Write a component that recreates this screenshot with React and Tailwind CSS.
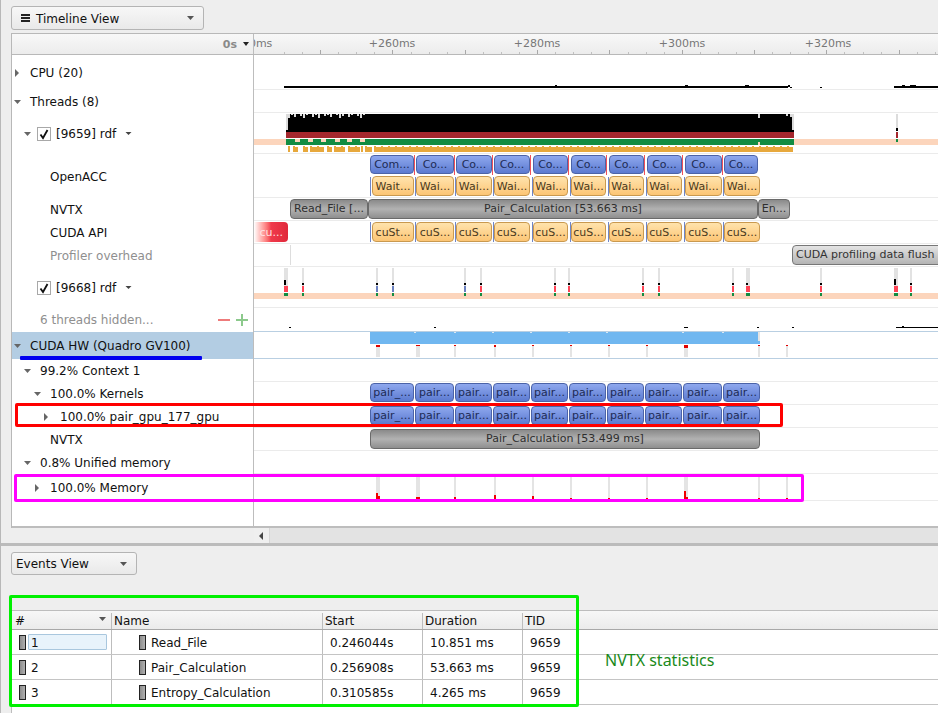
import React from "react";

const font = { fontFamily: '"DejaVu Sans", sans-serif' };

function Tri({ dir = "down", className = "" }) {
  return (
    <svg width="10" height="10" viewBox="0 0 10 10" className={"shrink-0 " + className}>
      {dir === "down" ? <polygon points="1,3 8,3 4.5,7" fill="#666" /> : <polygon points="3,1 7,5 3,9" fill="#666" />}
    </svg>
  );
}

function Check() {
  return (
    <span className="flex h-[14px] w-[14px] items-center justify-center border border-[#a8a8a8] bg-white shrink-0">
      <svg width="12" height="12" viewBox="0 0 12 12">
        <path d="M2.5 6.5 L5 10 L9.5 2" fill="none" stroke="#111" strokeWidth="1.8" />
      </svg>
    </span>
  );
}

const KIND = {
  blue: "border-[#4b63a8] from-[#8fa8ee] to-[#5c7ad0] text-[#1d2b55]",
  orange: "border-[#c9994f] from-[#ffe3ac] to-[#fcc574] text-[#4a3a20]",
  gray: "border-[#6a6a6a] from-[#8a8a8a] via-[#b2b2b2] to-[#8f8f8f] text-[#2e2e2e] pb-[2px]",
};

function Ev({ top, x1, x2, y1, y2, kind, text }) {
  return (
    <div
      className={
        "absolute flex items-center justify-center overflow-hidden whitespace-nowrap rounded-[4px] border bg-linear-to-b px-[1px] text-[11px] leading-none " +
        KIND[kind]
      }
      style={{ left: x1 - 254, width: x2 - x1, top: y1 - top, height: y2 - y1 }}
    >
      {text}
    </div>
  );
}

function Row({ top, h, left, leftClass = "", border = "border-[#ebebeb]", children, marks }) {
  return (
    <div className="flex" style={{ height: h }}>
      <div className={"w-[242px] shrink-0 border-r border-[#bdbdbd] flex items-center text-[12px] text-[#111] " + leftClass}>
        {left}
      </div>
      <div className={"relative flex-1 overflow-hidden border-b " + border}>
        {marks && (
          <svg className="absolute left-0 top-0 h-full w-full" shapeRendering="crispEdges">
            <g transform={`translate(-254,${-top})`}>{marks}</g>
          </svg>
        )}
        {children}
      </div>
    </div>
  );
}

const R = (x, y, w, h, c, k) => <rect key={k ?? `${x}-${y}-${w}-${h}-${c}`} x={x} y={y} width={w} height={h} fill={c} />;

const comX = [
  [370, 414], [416, 454], [456, 492], [494, 530], [533, 568],
  [571, 606], [609, 644], [647, 682], [685, 722], [724, 758],
];
const waitX = [
  [372, 414], [416, 454], [456, 492], [494, 530], [533, 568],
  [571, 606], [609, 644], [647, 682], [685, 722], [724, 760],
];
const pairX = [
  [370, 414], [415, 454], [455, 492], [493, 530], [531, 568],
  [569, 606], [607, 644], [645, 682], [683, 722], [723, 760],
];

// 9659 thread histogram
const jag = [];
for (let x = 288; x < 364; x += 3) {
  const d = [4, 1, 3, 0, 2, 4, 1, 0, 3, 1, 4, 0, 2, 1, 3, 0, 1, 4, 2, 0, 3, 1, 0, 2, 4, 1][(x - 288) / 3];
  if (d) jag.push(R(x, 114, 2, d, "#dcdcdc"));
}
const orangeSegs = [
  [288, 2], [293, 5], [303, 5], [310, 14], [327, 5], [334, 11], [348, 12], [361, 2], [365, 7], [374, 419],
];
const orange = orangeSegs.flatMap(([x, w]) => {
  const out = [R(x, 147, w, 5, "#e7a83c")];
  for (let i = x; i < x + w; i += 7) out.push(R(i, 146, 2, 6, "#e7a83c"));
  return out;
});
const notches = [295, 308, 321, 335, 347, 360].map((x) => R(x, 139, 5, 3, "#fcd5bc"));

const cpuMarks = [
  R(284, 86, 504, 2, "#000"),
  R(790, 87, 2, 1, "#000"), R(820, 87, 2, 1, "#000"),
  R(894, 86, 44, 2, "#000"), R(902, 85, 3, 1, "#000"), R(910, 85, 6, 1, "#000"),
  R(555, 85, 2, 1, "#000"), R(685, 85, 3, 1, "#000"), R(745, 85, 4, 1, "#000"), R(788, 85, 2, 2, "#000"),
];

const threadMarks = [
  R(254, 139, 684, 6, "#fcd5bc"),
  R(286, 114, 508, 18, "#000"),
  ...jag,
  R(286, 114, 2, 16, "#dcdcdc"),
  R(758, 114, 2, 4, "#dcdcdc"), R(786, 114, 2, 2, "#dcdcdc"), R(790, 114, 2, 3, "#dcdcdc"), R(792, 114, 2, 16, "#dcdcdc"),
  R(286, 132, 508, 6, "#a5272d"),
  R(286, 139, 508, 6, "#128c42"),
  ...notches,
  R(758, 142, 2, 3, "#fcd5bc"),
  ...orange,
  R(896, 114, 2, 14, "#dcdcdc"), R(896, 128, 2, 3, "#000"), R(896, 132, 2, 6, "#a5272d"), R(896, 139, 2, 3, "#128c42"),
];

const t2 = [
  [284, 4, 5, "#ff4455"], [302, 2, 3, "#ff4455"], [376, 2, 3, "#6a80c0"], [392, 2, 3, "#6a80c0"],
  [464, 2, 3, "#6a80c0"], [480, 2, 3, "#ff4455"], [554, 2, 3, "#ff4455"], [568, 2, 3, "#ff4455"],
  [642, 2, 3, "#ff4455"], [658, 2, 3, "#ff4455"], [732, 2, 3, "#ff4455"], [746, 4, 1, "#ff4455"],
  [820, 2, 3, "#ff4455"], [894, 4, 6, "#ff4455"], [910, 2, 1, "#ff4455"],
];
const t2Marks = [
  R(254, 293, 684, 6, "#fcd5bc"),
  ...t2.flatMap(([x, w, b, c]) => [
    R(x, 268, w, 18, "#e2e2e2"),
    R(x, 285 - (b > 3 ? b : 2), w > 2 ? 2 : w, b > 3 ? b : 2, "#000"),
    R(x, 286, w, 6, c),
    R(x, 293, w, 3, "#128c42"),
  ]),
];

const hiddenMarks = [
  R(289, 327, 2, 1, "#000"), R(434, 327, 2, 1, "#000"), R(684, 327, 4, 1, "#000"),
  R(757, 327, 2, 1, "#000"), R(792, 327, 2, 1, "#000"), R(896, 327, 42, 1, "#000"), R(902, 326, 2, 1, "#000"),
];

const hwLines = [[376, 4], [416, 4], [454, 2], [494, 2], [532, 2], [570, 2], [608, 2], [646, 2], [684, 4], [758, 2], [786, 2]];
const hwMarks = [
  R(370, 332, 390, 12, "#70b7f0"),
  R(758, 332, 2, 9, "#e4e4e4"),
  ...[414, 454, 492, 530, 568, 606, 682, 722].map((x) => R(x, 332, 2, 1, "#d8e8f4")),
  ...hwLines.map(([x, w]) => R(x, 345, w, 12, "#e4e4e4")),
  ...hwLines.map(([x, w]) => R(x, 345, w, 1, "#e00000")),
  R(376, 345, 4, 2, "#e00000"), R(684, 345, 4, 3, "#e00000"), R(494, 345, 2, 2, "#e00000"),
];

const memMarks = [
  ...hwLines.map(([x, w]) => R(x, 477, w, 22, "#e4e4e4")),
  R(376, 493, 2, 6, "#f00000"), R(376, 496, 4, 3, "#f00000"), R(416, 497, 4, 2, "#f00000"), R(454, 497, 2, 2, "#f00000"),
  R(494, 495, 2, 4, "#f00000"), R(532, 496, 2, 3, "#f00000"), R(570, 498, 2, 1, "#f00000"), R(608, 498, 2, 1, "#f00000"),
  R(646, 498, 2, 1, "#f00000"), R(684, 491, 2, 8, "#f00000"), R(684, 497, 4, 2, "#f00000"), R(758, 498, 2, 1, "#f00000"), R(786, 498, 2, 1, "#f00000"),
];

const ticks = [];
for (let i = 0; i < 40; i++) {
  const x = 284 + i * 18.08;
  const major = i % 4 === 2;
  ticks.push(R(Math.round(x), major ? 50 : 52, 1, major ? 4 : 2, major ? "#a8a8a8" : "#c0c0c0", "t" + i));
}

function RulerLabel({ x, t }) {
  return (
    <span className="absolute top-[3px] -translate-x-1/2 whitespace-nowrap text-[11px] leading-[14px] text-[#777]" style={{ left: x - 254 }}>
      {t}
    </span>
  );
}

function Swatch() {
  return <span className="inline-block h-[15px] w-[7px] shrink-0 border border-[#222] bg-linear-to-r from-[#8c8c8c] to-[#b0b0b0]" />;
}

function Cell({ w, className = "", children }) {
  return (
    <div className={"flex h-full items-center border-r border-[#bdbdbd] " + className} style={{ width: w }}>
      {children}
    </div>
  );
}

const events = [
  ["1", "Read_File", "0.246044s", "10.851 ms"],
  ["2", "Pair_Calculation", "0.256908s", "53.663 ms"],
  ["3", "Entropy_Calculation", "0.310585s", "4.265 ms"],
];

export default function App() {
  return (
    <div className="relative h-[713px] w-[938px] overflow-hidden border-l border-[#b8b8b8] bg-[#eeeeee] text-[12px] text-[#111]" style={font}>
      {/* toolbar */}
      <div className="ml-[10px] pt-[6px] h-[33px]">
        <div className="flex h-[24px] w-[193px] items-center rounded-[3px] border border-[#b4b4b4] bg-linear-to-b from-[#f7f7f7] to-[#e9e9e9] pl-[8px] pr-[8px] pt-[2px]">
          <svg width="11" height="10" viewBox="0 0 11 10" className="mr-[5px] mb-[2px]">
            <rect x="1" y="1" width="9" height="2" fill="#222" />
            <rect x="1" y="4" width="9" height="2" fill="#222" />
            <rect x="1" y="7" width="9" height="2" fill="#222" />
          </svg>
          <span className="flex-1">Timeline View</span>
          <svg width="9" height="6" viewBox="0 0 9 6" className="mb-[2px]"><polygon points="1,1 8,1 4.5,5" fill="#555" /></svg>
        </div>
      </div>

      {/* timeline panel */}
      <div className="ml-[10px] border-l border-t border-[#b8b8b8] bg-white">
        {/* header */}
        <div className="flex h-[21px] border-b border-[#b8b8b8] bg-linear-to-b from-[#f8f8f8] to-[#ececec]">
          <div className="flex w-[242px] shrink-0 items-center justify-end border-r border-[#bdbdbd] pr-[3px] pt-[3px]">
            <span className="mr-[5px] text-[11px] font-bold text-[#8a8a8a]">0s</span>
            <svg width="8" height="6" viewBox="0 0 8 6" className="mb-[3px]"><polygon points="1,1 7,1 4,5" fill="#222" /></svg>
          </div>
          <div className="relative flex-1 overflow-hidden">
            <svg className="absolute left-0 top-0 h-full w-full" shapeRendering="crispEdges">
              <g transform="translate(-254,-34)">{ticks}</g>
            </svg>
            <RulerLabel x={249} t="+240ms" />
            <RulerLabel x={392} t="+260ms" />
            <RulerLabel x={537} t="+280ms" />
            <RulerLabel x={682} t="+300ms" />
            <RulerLabel x={828} t="+320ms" />
          </div>
        </div>

        <Row top={55} h={35} marks={cpuMarks} left={<><Tri dir="right" className="ml-[0px]" /><span className="ml-[8px]">CPU (20)</span></>} />
        <Row top={90} h={23} left={<><Tri className="ml-[1px]" /><span className="ml-[7px]">Threads (8)</span></>} />
        <Row
          top={113}
          h={41}
          marks={threadMarks}
          left={
            <>
              <Tri className="ml-[11px]" />
              <span className="ml-[4px]"><Check /></span>
              <span className="ml-[5px]">[9659] rdf</span>
              <svg width="7" height="5" viewBox="0 0 7 5" className="ml-[9px]"><polygon points="0.5,1 6.5,1 3.5,4" fill="#444" /></svg>
            </>
          }
        />
        <Row top={154} h={44} left={<span className="ml-[38px] mt-[2px]">OpenACC</span>}>
          {comX.map(([a, b], i) => (
            <Ev key={i} top={154} x1={a} x2={b} y1={155} y2={174} kind="blue" text={i === 0 ? "Com..." : "Co..."} />
          ))}
          {waitX.map(([a, b], i) => (
            <Ev key={i} top={154} x1={a} x2={b} y1={176} y2={196} kind="orange" text={i === 0 ? "Wait..." : "Wai..."} />
          ))}
          <svg className="absolute left-0 top-0 h-full w-full" shapeRendering="crispEdges">
            <g transform="translate(-254,-154)">
              {comX.slice(0, 9).map(([a, b], i) => R(b, 155, 1, 20, "#f0505a", "r" + i))}
              {comX.map(([a, b], i) => R(a === 370 ? 370 : a - 1, 177, 1, 19, "#6f86c8", "b" + i))}
            </g>
          </svg>
        </Row>
        <Row top={198} h={23} left={<span className="ml-[38px]">NVTX</span>}>
          <Ev top={198} x1={290} x2={368} y1={199} y2={219} kind="gray" text="Read_File [..." />
          <Ev top={198} x1={368} x2={758} y1={199} y2={219} kind="gray" text="Pair_Calculation [53.663 ms]" />
          <Ev top={198} x1={758} x2={790} y1={199} y2={219} kind="gray" text="En..." />
        </Row>
        <Row top={221} h={23} left={<span className="ml-[38px]">CUDA API</span>}>
          <div className="absolute left-0 top-[1px] flex h-[20px] w-[34px] items-center justify-end rounded-r-[4px] bg-linear-to-r from-[#ffffff] via-[#f03a4c] to-[#e0283a] pr-[5px] text-[11px] leading-none text-[#ffe0e0]">
            cu...
          </div>
          {waitX.map(([a, b], i) => (
            <Ev key={i} top={221} x1={a} x2={b} y1={222} y2={242} kind="orange" text={i === 0 ? "cuSt..." : "cuS..."} />
          ))}
          <svg className="absolute left-0 top-0 h-full w-full" shapeRendering="crispEdges">
            <g transform="translate(-254,-221)">
              {comX.map(([a], i) => R(a === 370 ? 370 : a - 1, 222, 1, 20, "#6f86c8", "c" + i))}
            </g>
          </svg>
        </Row>
        <Row top={244} h={23} marks={[R(290, 245, 1, 20, "#dddddd", "p")]} left={<span className="ml-[38px] text-[#8f8f8f]">Profiler overhead</span>}>
          <div className="absolute left-[538px] top-[1px] flex h-[20px] w-[160px] items-center overflow-hidden whitespace-nowrap rounded-l-[4px] border border-[#777] bg-linear-to-b from-[#e4e4e4] to-[#b4b4b4] pl-[3px] pb-[1px] text-[11px] leading-none text-[#333]">
            CUDA profiling data flush overhead
          </div>
        </Row>
        <Row
          top={267}
          h={41}
          marks={t2Marks}
          left={
            <>
              <span className="ml-[25px]"><Check /></span>
              <span className="ml-[5px]">[9668] rdf</span>
              <svg width="7" height="5" viewBox="0 0 7 5" className="ml-[9px]"><polygon points="0.5,1 6.5,1 3.5,4" fill="#444" /></svg>
            </>
          }
        />
        <Row
          top={308}
          h={24}
          marks={hiddenMarks}
          border="border-[#b9cfe2]"
          left={
            <>
              <span className="ml-[28px] flex-1 text-[#8f8f8f]">6 threads hidden...</span>
              <svg width="32" height="14" viewBox="0 0 32 14" className="mr-[3px]">
                <rect x="0" y="6" width="12" height="2" fill="#ee7b7b" />
                <rect x="18" y="6" width="12" height="2" fill="#8cc98c" />
                <rect x="23" y="1" width="2" height="12" fill="#8cc98c" />
              </svg>
            </>
          }
        />
        <Row
          top={332}
          h={27}
          marks={hwMarks}
          border="border-[#b9cfe2]"
          leftClass="bg-[#b3cde3]"
          left={<><Tri className="ml-[1px]" /><span className="ml-[7px]">CUDA HW (Quadro GV100)</span></>}
        />
        <Row top={359} h={23} left={<><Tri className="ml-[11px]" /><span className="ml-[7px]">99.2% Context 1</span></>} />
        <Row top={382} h={23} left={<><Tri className="ml-[21px]" /><span className="ml-[7px]">100.0% Kernels</span></>}>
          {pairX.map(([a, b], i) => (
            <Ev key={i} top={382} x1={a} x2={b} y1={383} y2={402} kind="blue" text={i === 0 ? "pair_..." : "pair..."} />
          ))}
        </Row>
        <Row top={405} h={23} left={<><Tri dir="right" className="ml-[29px]" /><span className="ml-[9px]">100.0% pair_gpu_177_gpu</span></>}>
          {pairX.map(([a, b], i) => (
            <Ev key={i} top={405} x1={a} x2={b} y1={406} y2={425} kind="blue" text={i === 0 ? "pair_..." : "pair..."} />
          ))}
        </Row>
        <Row top={428} h={23} left={<span className="ml-[38px]">NVTX</span>}>
          <Ev top={428} x1={370} x2={760} y1={429} y2={449} kind="gray" text="Pair_Calculation [53.499 ms]" />
        </Row>
        <Row top={451} h={23} left={<><Tri className="ml-[11px]" /><span className="ml-[7px]">0.8% Unified memory</span></>} />
        <Row top={474} h={27} marks={memMarks} left={<><Tri dir="right" className="ml-[20px]" /><span className="ml-[8px]">100.0% Memory</span></>} />
        <div className="flex h-[27px] border-b-2 border-[#bdbdbd]">
          <div className="w-[242px] shrink-0 border-r border-[#bdbdbd]" />
        </div>
      </div>

      {/* scrollbar */}
      <div className="flex h-[15px] pl-[253px]">
        <div className="flex w-[15px] items-center justify-center bg-[#efefef]">
          <svg width="5" height="8" viewBox="0 0 5 8"><polygon points="4,0 4,8 0,4" fill="#444" /></svg>
        </div>
        <div className="flex-1 border-l border-[#d6d6d6] bg-[#e3e3e3]" />
      </div>
      <div className="h-[3px] bg-[#bbbbbb]" />

      {/* events */}
      <div className="ml-[10px] mt-[6px] flex h-[23px] w-[126px] items-center rounded-[3px] border border-[#b4b4b4] bg-linear-to-b from-[#f7f7f7] to-[#e9e9e9] pl-[4px] pr-[8px]">
        <span className="flex-1">Events View</span>
        <svg width="9" height="6" viewBox="0 0 9 6"><polygon points="1,1 8,1 4.5,5" fill="#555" /></svg>
      </div>

      <div className="ml-[10px] mt-[35px] h-[104px] border-l border-t border-[#bdbdbd] bg-white">
        <div className="flex h-[19px] border-b border-[#a8a8a8] bg-linear-to-b from-[#f7f7f7] to-[#ebebeb] pt-[2px]">
          <Cell w={100} className="justify-between pl-[3px] pr-[4px]">
            <span>#</span>
            <svg width="9" height="6" viewBox="0 0 9 6" className="mb-[4px]"><polygon points="1,1 8,1 4.5,5" fill="#555" /></svg>
          </Cell>
          <Cell w={211} className="pl-[2px]">Name</Cell>
          <Cell w={100} className="pl-[2px]">Start</Cell>
          <Cell w={100} className="pl-[2px]">Duration</Cell>
          <div className="flex items-center pl-[2px]">TID</div>
        </div>
        {events.map(([n, name, start, dur], i) => (
          <div key={n} className="flex h-[25px] border-b border-[#c4c4c4]">
            <Cell w={100} className="pl-[7px]">
              <Swatch />
              {i === 0 ? (
                <span className="ml-[2px] flex h-[16px] w-[79px] items-center rounded-[1px] border border-[#a9c7de] bg-[#e8f3fb] pl-[2px] pt-[2px]">{n}</span>
              ) : (
                <span className="ml-[5px] pt-[2px]">{n}</span>
              )}
            </Cell>
            <Cell w={211} className="pl-[27px]">
              <Swatch />
              <span className="ml-[5px] pt-[2px]">{name}</span>
            </Cell>
            <Cell w={100} className="pl-[7px] pt-[2px]">{start}</Cell>
            <Cell w={100} className="pl-[7px] pt-[2px]">{dur}</Cell>
            <div className="flex items-center pl-[7px] pt-[2px]">9659</div>
          </div>
        ))}
      </div>

      {/* annotations drawn over the capture */}
      <div className="pointer-events-none absolute left-[19px] top-[356px] h-[4px] w-[182px] rounded-[1px] bg-[#0000f0]" />
      <div className="pointer-events-none absolute left-[14px] top-[403px] h-[24px] w-[768px] rounded-[2px] border-[3px] border-[#ff0000]" />
      <div className="pointer-events-none absolute left-[13px] top-[474px] h-[28px] w-[790px] rounded-[2px] border-[3px] border-[#ff00ff]" />
      <div className="pointer-events-none absolute left-[8px] top-[595px] h-[112px] w-[570px] rounded-[2px] border-[3px] border-[#00f000]" />
      <div className="absolute left-[604px] top-[650px] text-[16px] leading-[20px] text-[#1a8a1a]" style={{ fontFamily: '"Noto Sans", sans-serif' }}>
        NVTX statistics
      </div>
    </div>
  );
}
